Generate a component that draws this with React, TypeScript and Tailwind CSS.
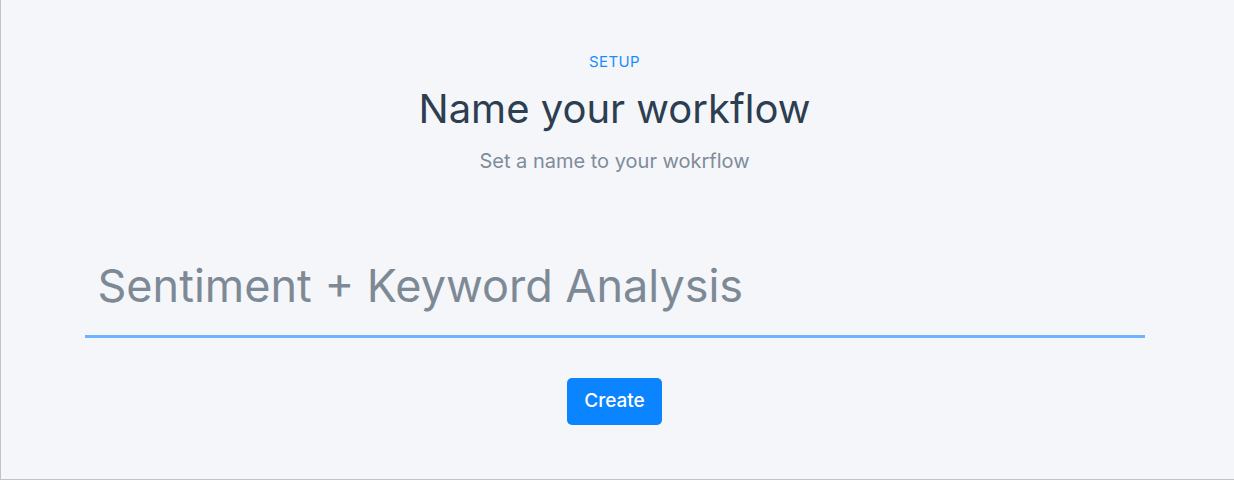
export default function App() {
  return (
    <div
      className="h-[480px] w-full bg-[#f5f6fa] border-l border-b border-[#c2c3c7] pr-[6px] flex flex-col items-center"
      style={{ fontFamily: "Inter, 'Noto Sans', sans-serif" }}
    >
      <div className="mt-[54px] text-[15px] leading-[16px] text-[#1a8cff] tracking-wide">SETUP</div>
      <h1 className="mt-[16px] text-[40px] leading-[46px] text-[#2c3e50] font-normal">Name your workflow</h1>
      <p className="mt-[17px] text-[20px] leading-[24px] text-[#7f8c9a]">Set a name to your wokrflow</p>

      <div className="mt-[84px] w-[1060px] border-b-[3px] border-[#6db3ff] pl-[13px] pr-3 pb-[20px]">
        <input
          className="w-full bg-transparent outline-none text-[45px] leading-[58px] text-[#7d8a96]"
          defaultValue="Sentiment + Keyword Analysis"
        />
      </div>

      <button className="mt-[40px] h-[47px] w-[95px] rounded-[5px] bg-[#0a84ff] text-white text-[19px] font-medium">
        Create
      </button>
    </div>
  );
}
